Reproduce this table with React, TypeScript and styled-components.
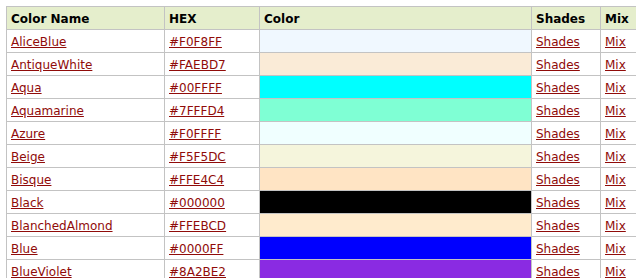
import styled, { createGlobalStyle } from 'styled-components';

const GlobalStyle = createGlobalStyle`
	body {
		margin: 6px;
		background: #ffffff;
		font-family: Verdana, 'DejaVu Sans', sans-serif;
	}
`;

type NamedColor = { name: string; hex: string };

const COLORS: NamedColor[] = [
	{ name: 'AliceBlue', hex: '#F0F8FF' },
	{ name: 'AntiqueWhite', hex: '#FAEBD7' },
	{ name: 'Aqua', hex: '#00FFFF' },
	{ name: 'Aquamarine', hex: '#7FFFD4' },
	{ name: 'Azure', hex: '#F0FFFF' },
	{ name: 'Beige', hex: '#F5F5DC' },
	{ name: 'Bisque', hex: '#FFE4C4' },
	{ name: 'Black', hex: '#000000' },
	{ name: 'BlanchedAlmond', hex: '#FFEBCD' },
	{ name: 'Blue', hex: '#0000FF' },
	{ name: 'BlueViolet', hex: '#8A2BE2' },
];

const App = () => (
	<>
		<GlobalStyle />
		<Table>
			<colgroup>
				<col style={{ width: 158 }} />
				<col style={{ width: 95 }} />
				<col style={{ width: 272 }} />
				<col style={{ width: 69 }} />
				<col />
			</colgroup>
			<thead>
				<tr>
					<HeadCell>Color Name</HeadCell>
					<HeadCell>HEX</HeadCell>
					<HeadCell>Color</HeadCell>
					<HeadCell>Shades</HeadCell>
					<HeadCell>Mix</HeadCell>
				</tr>
			</thead>
			<tbody>
				{COLORS.map((c) => (
					<tr key={c.name}>
						<Cell>
							<Link href="#">{c.name}</Link>
						</Cell>
						<Cell>
							<Link href="#">{c.hex}</Link>
						</Cell>
						<Swatch $color={c.hex} />
						<Cell>
							<Link href="#">Shades</Link>
						</Cell>
						<Cell>
							<Link href="#">Mix</Link>
						</Cell>
					</tr>
				))}
			</tbody>
		</Table>
	</>
);

export default App;

const Table = styled.table`
	width: 632px;
	border-collapse: collapse;
	table-layout: fixed;
	font-size: 12px;
	line-height: 15px;
	border: 1px solid #c3c3c3;
`;

const HeadCell = styled.th`
	height: 18px;
	padding: 3px 4px 1px;
	text-align: left;
	vertical-align: middle;
	font-weight: bold;
	color: #000000;
	background-color: #e5eecc;
	border: 1px solid #c3c3c3;
	white-space: nowrap;
`;

const Cell = styled.td`
	height: 18px;
	padding: 3px 4px 1px;
	vertical-align: middle;
	border: 1px solid #c3c3c3;
	white-space: nowrap;
`;

const Swatch = styled(Cell)<{ $color: string }>`
	background-color: ${(p) => p.$color};
`;

const Link = styled.a`
	color: #900b09;
	text-decoration: underline;
`;
